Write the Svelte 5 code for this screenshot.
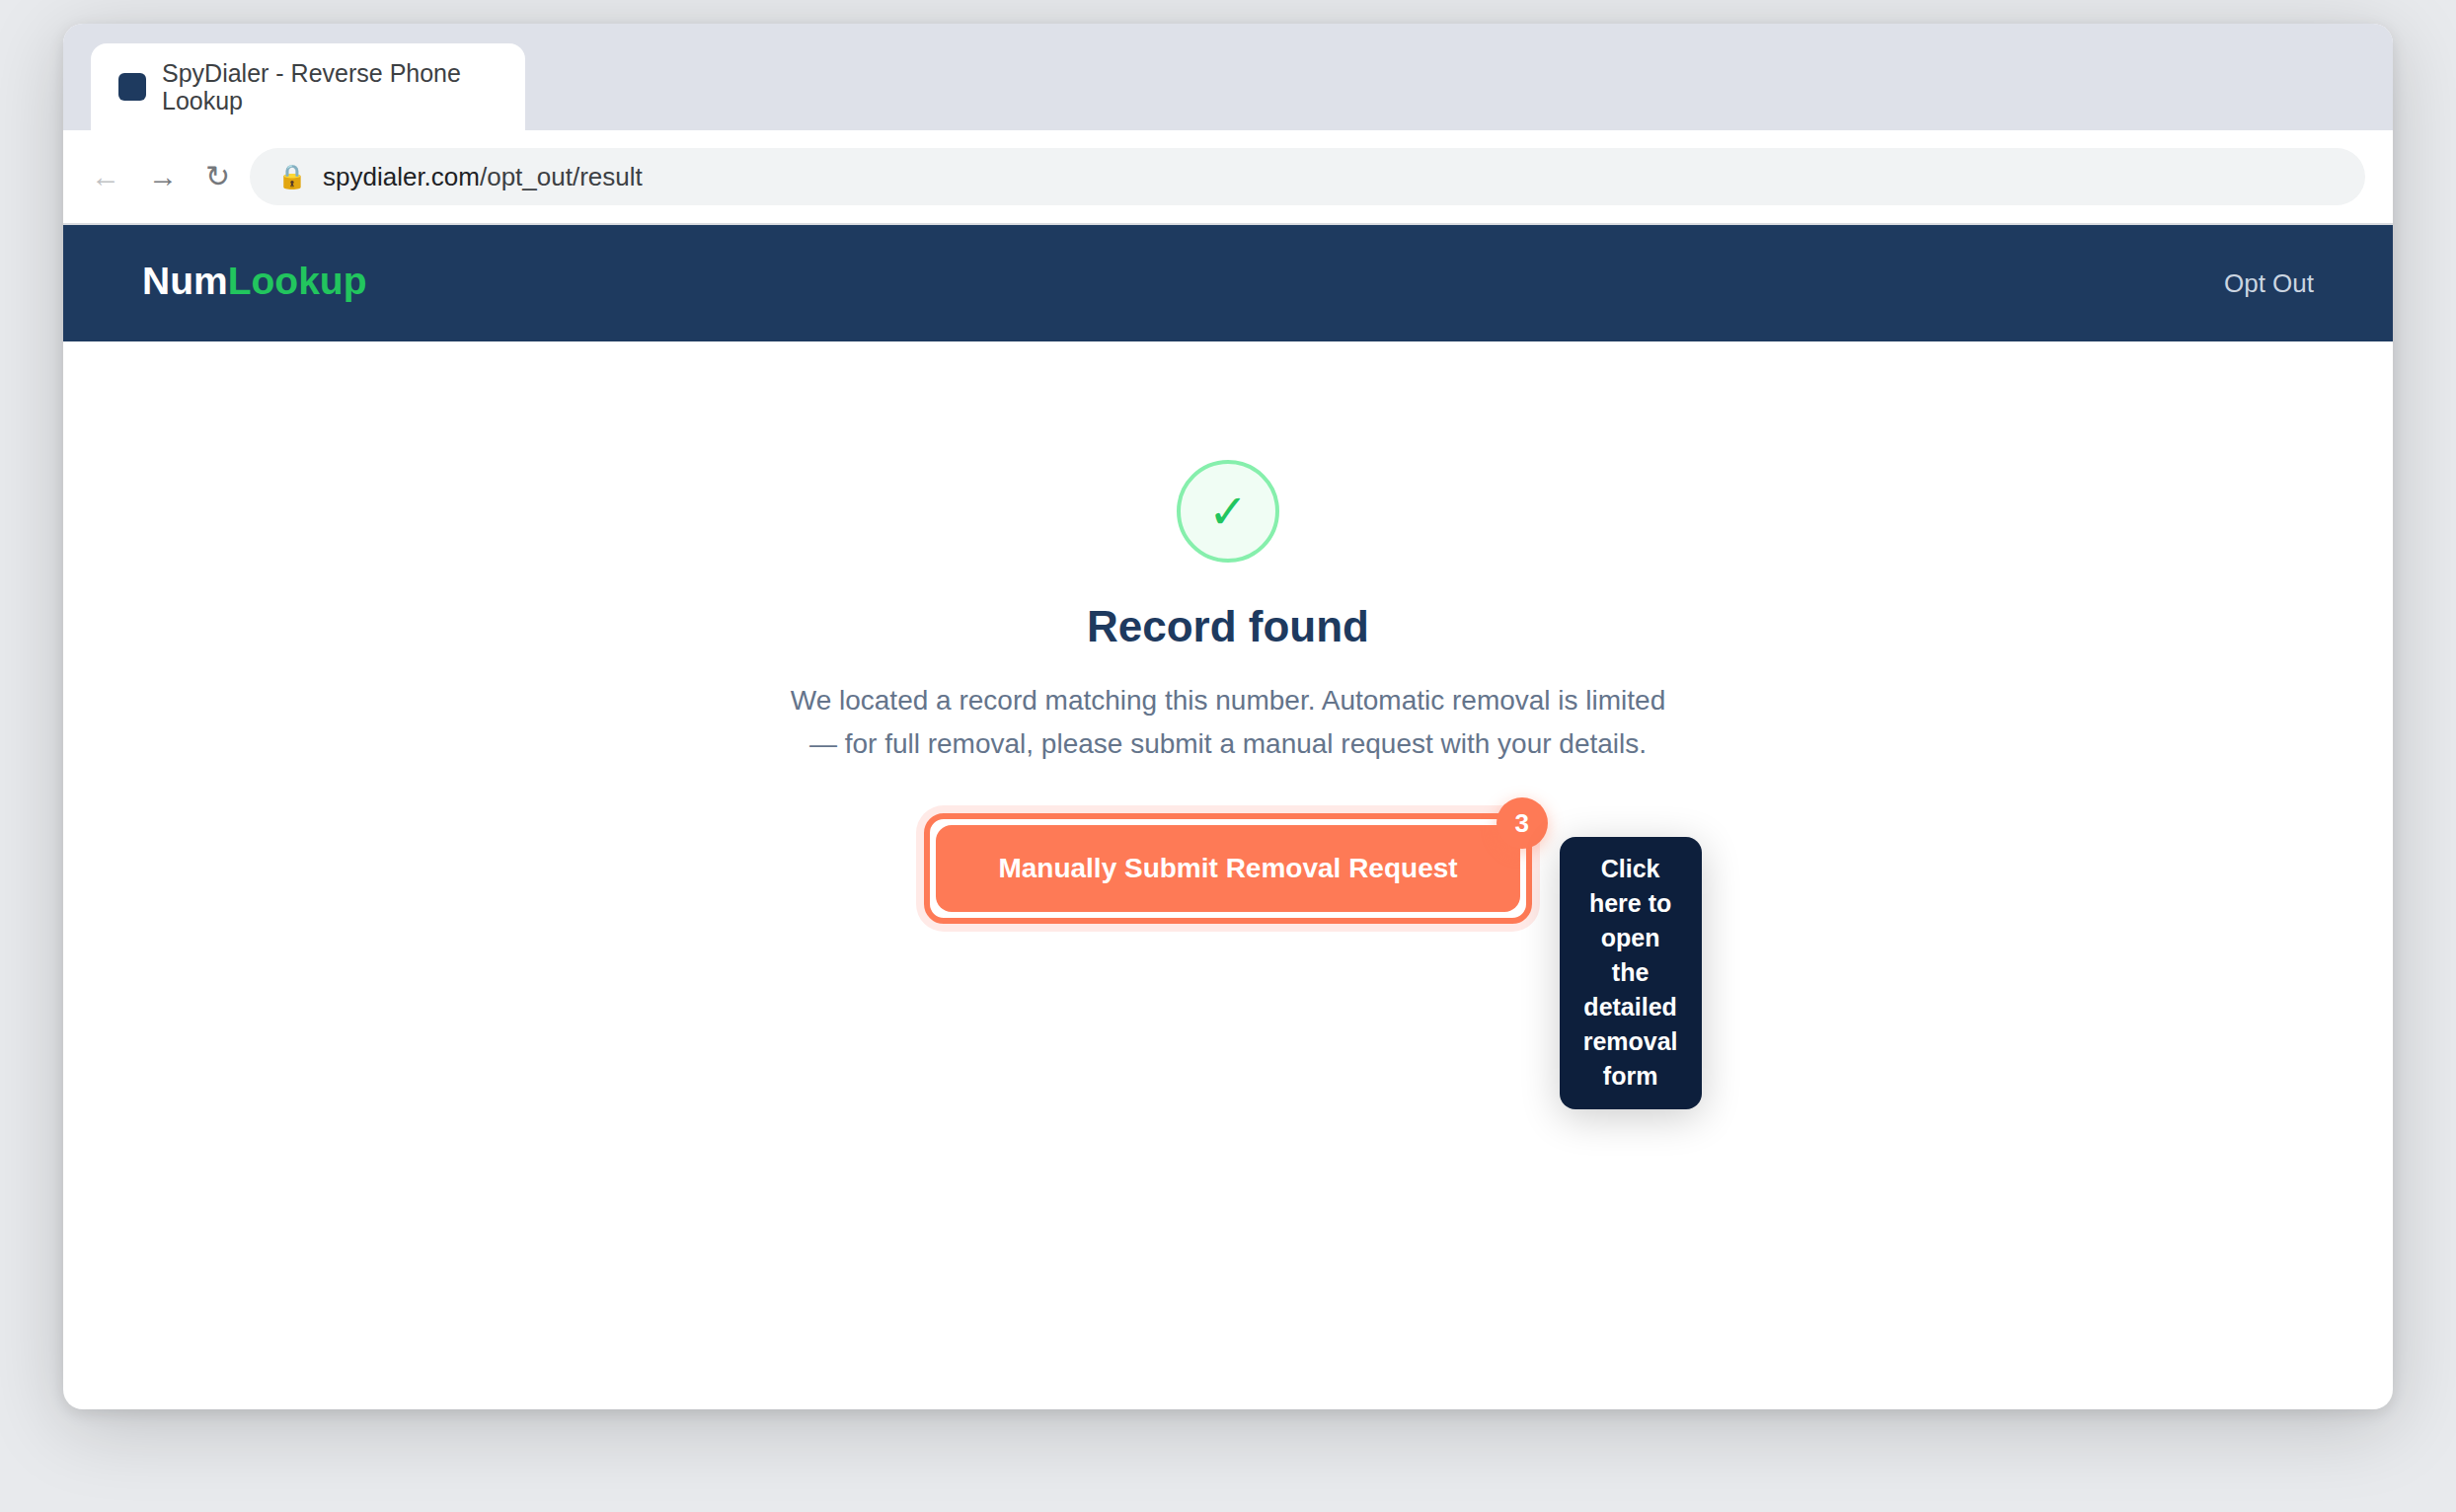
<script>
  const page = {
    title: 'SpyDialer - Reverse Phone Lookup',
    host: 'spydialer.com',
    path: '/opt_out/result'
  };
  const step = 3;
</script>

<div class="stage">
  <div class="window">
    <div class="tabs">
      <div class="tab">
        <span class="favicon"></span>
        <span class="tab-title">{page.title}</span>
      </div>
    </div>

    <div class="toolbar">
      <div class="nav">
        <button class="back" aria-label="Back">←</button>
        <button aria-label="Forward">→</button>
        <button aria-label="Reload">↻</button>
      </div>
      <div class="address">
        <span class="lock">🔒</span>
        <span class="url"><span class="host">{page.host}</span>{page.path}</span>
      </div>
    </div>

    <header>
      <div class="logo">Num<span>Lookup</span></div>
      <a href="#opt-out">Opt Out</a>
    </header>

    <main>
      <div class="check">✓</div>
      <h1>Record found</h1>
      <p>
        We located a record matching this number. Automatic removal is limited — for full removal,
        please submit a manual request with your details.
      </p>
      <div class="action">
        <button class="submit" aria-describedby="hint">Manually Submit Removal Request</button>
        <span class="ring"></span>
        <span class="badge">{step}</span>
        <div class="hint" id="hint" role="tooltip">Click here to open the detailed removal form</div>
      </div>
    </main>
  </div>
</div>

<style>
  :global(body) {
    background: #e8eaed;
    font-family: 'Liberation Sans', Arial, sans-serif;
  }

  .stage {
    display: flex;
    box-sizing: border-box;
    min-height: 100vh;
    padding: 24px 64px 104px;
    overflow: hidden;
  }

  .window {
    display: flex;
    flex: 1;
    flex-direction: column;
    border-radius: 20px;
    background: #fff;
    box-shadow:
      0 16px 80px rgba(0, 0, 0, 0.18),
      0 4px 16px rgba(0, 0, 0, 0.1);
  }

  .tabs {
    display: flex;
    padding: 20px 28px 0;
    border-radius: 20px 20px 0 0;
    background: #dee1e9;
  }

  .tab {
    display: flex;
    align-items: center;
    gap: 16px;
    box-sizing: border-box;
    width: 440px;
    padding: 16px 28px;
    border-radius: 16px 16px 0 0;
    background: #fff;
    color: #3c4043;
    font-size: 25px;
    line-height: 28px;
  }

  .favicon {
    flex: none;
    width: 28px;
    height: 28px;
    border-radius: 6px;
    background: #1e3a5f;
  }

  .toolbar {
    display: flex;
    align-items: center;
    gap: 20px;
    padding: 18px 28px;
    border-bottom: 2px solid #dadce0;
  }

  .nav {
    display: flex;
    gap: 28px;
  }

  .nav button {
    padding: 0;
    border: 0;
    background: none;
    color: #75787c;
    font-family: inherit;
    font-size: 30px;
    line-height: 34px;
  }

  .nav .back {
    color: #bfc1c3;
  }

  .address {
    display: flex;
    flex: 1;
    align-items: center;
    gap: 16px;
    padding: 14px 28px;
    border-radius: 30px;
    background: #f1f3f4;
    color: #3c4043;
    font-size: 26px;
    line-height: 30px;
  }

  .lock {
    font-size: 24px;
  }

  .host {
    color: #202124;
  }

  header {
    display: flex;
    align-items: center;
    justify-content: space-between;
    padding: 36px 80px;
    background: #1e3a5f;
  }

  .logo {
    padding-bottom: 4px;
    color: #fff;
    font-size: 39px;
    font-weight: 700;
    line-height: 42px;
  }

  .logo span {
    color: #22c55e;
  }

  header a {
    color: #cbd5e1;
    font-size: 26px;
    text-decoration: none;
  }

  main {
    display: flex;
    flex-direction: column;
    align-items: center;
    padding: 120px 80px;
  }

  .check {
    display: flex;
    align-items: center;
    justify-content: center;
    box-sizing: border-box;
    width: 104px;
    height: 104px;
    border: 4px solid #86efac;
    border-radius: 50%;
    background: #f0fdf4;
    color: #22c55e;
    font-size: 48px;
  }

  h1 {
    margin: 40px 0 28px;
    color: #1e3a5f;
    font-size: 44px;
    line-height: 50px;
  }

  p {
    max-width: 920px;
    margin: 0 0 60px;
    color: #64748b;
    font-size: 28px;
    line-height: 44px;
    text-align: center;
  }

  .action {
    position: relative;
  }

  .submit {
    display: block;
    padding: 28px 63px;
    border: 0;
    border-radius: 16px;
    background: #fe7a56;
    color: #fff;
    font-family: inherit;
    font-size: 28px;
    font-weight: 700;
    line-height: 32px;
  }

  .ring {
    position: absolute;
    inset: -12px;
    border: 6px solid #fe7a56;
    border-radius: 20px;
    box-shadow: 0 0 0 8px #ffeae7;
    pointer-events: none;
  }

  .badge {
    position: absolute;
    top: -28px;
    right: -28px;
    width: 52px;
    border-radius: 50%;
    background: #fe7a56;
    box-shadow: 0 4px 16px rgba(255, 122, 85, 0.4);
    color: #fff;
    font-size: 26px;
    font-weight: 700;
    line-height: 52px;
    text-align: center;
  }

  .hint {
    position: absolute;
    top: 12px;
    left: calc(100% + 40px);
    box-sizing: border-box;
    width: 144px;
    padding: 15px 20px 16px;
    border-radius: 16px;
    background: #0d1f3c;
    box-shadow: 0 8px 40px rgba(0, 0, 0, 0.2);
    color: #fff;
    font-size: 25px;
    font-weight: 700;
    line-height: 35px;
    text-align: center;
  }
</style>
